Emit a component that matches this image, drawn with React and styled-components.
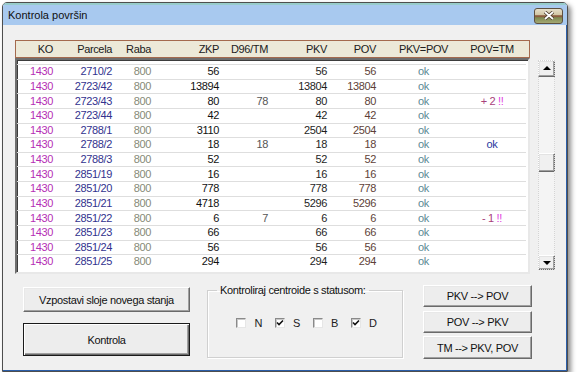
import React from "react"
import styled, { createGlobalStyle } from "styled-components"

const GlobalStyle = createGlobalStyle`
  body {
    margin: 0;
    background: #ffffff;
    font-family: "Liberation Sans", Arial, sans-serif;
  }
`

const columns = [
  { key: "ko", label: "KO", width: 39, align: "right", color: "#b52fb5" },
  { key: "parcela", label: "Parcela", width: 59, align: "right", color: "#32328e" },
  { key: "raba", label: "Raba", width: 39, align: "right", color: "#868a78" },
  { key: "zkp", label: "ZKP", width: 68, align: "right", color: "#111111" },
  { key: "d96", label: "D96/TM", width: 49, align: "right", color: "#555555" },
  { key: "pkv", label: "PKV", width: 59, align: "right", color: "#1e1e1e" },
  { key: "pov", label: "POV", width: 49, align: "right", color: "#5e3f38" },
  { key: "eq", label: "PKV=POV", width: 89, align: "center", color: "#5a8a94" },
  { key: "tm", label: "POV=TM", width: 48, align: "center", color: "#2838a0" }
]

const gridCols = columns.map(c => `${c.width}px`).join(" ")

const rows = [
  ["2710/2", "56", "", "56", "56", "ok", ""],
  ["2723/42", "13894", "", "13804", "13804", "ok", ""],
  ["2723/43", "80", "78", "80", "80", "ok", "+2"],
  ["2723/44", "42", "", "42", "42", "ok", ""],
  ["2788/1", "3110", "", "2504", "2504", "ok", ""],
  ["2788/2", "18", "18", "18", "18", "ok", "ok"],
  ["2788/3", "52", "", "52", "52", "ok", ""],
  ["2851/19", "16", "", "16", "16", "ok", ""],
  ["2851/20", "778", "", "778", "778", "ok", ""],
  ["2851/21", "4718", "", "5296", "5296", "ok", ""],
  ["2851/22", "6", "7", "6", "6", "ok", "-1"],
  ["2851/23", "66", "", "66", "66", "ok", ""],
  ["2851/24", "56", "", "56", "56", "ok", ""],
  ["2851/25", "294", "", "294", "294", "ok", ""]
]

const statuses = [
  { label: "N", checked: false },
  { label: "S", checked: true },
  { label: "B", checked: false },
  { label: "D", checked: true }
]

const Window = styled.div`
  margin: 2px 0 0 2px;
  width: 566px;
  height: 370px;
  box-sizing: border-box;
  border: 1px solid #4e4e4e;
  border-radius: 5px 5px 0 0;
  box-shadow: 3px 3px 5px rgba(0, 0, 0, 0.45);
  display: flex;
  flex-direction: column;
  overflow: hidden;
`

const TitleBar = styled.div`
  height: 22px;
  box-sizing: border-box;
  border-top: 2px solid #97cccb;
  background: #a8c9ef;
  display: flex;
  align-items: center;
  justify-content: space-between;
  padding: 0 4px 0 5px;
  font-size: 11px;
  color: #101010;
`

const CloseButton = styled.div`
  width: 29px;
  height: 16px;
  margin-top: 1px;
  box-sizing: border-box;
  border: 1px solid #5e5040;
  border-radius: 3px;
  background: linear-gradient(
    #e6dfca 0%,
    #d2c7a6 40%,
    #8c5e40 48%,
    #8c5e40 56%,
    #7e8a50 62%,
    #a4a874 100%
  );
  display: flex;
  align-items: center;
  justify-content: center;
`

const Client = styled.div`
  flex: 1;
  background: #f0f0f0;
  border-right: 1px solid #2b5ea8;
  border-bottom: 1px solid #2b5ea8;
  padding: 15px 0 0 12px;
  display: flex;
  flex-direction: column;
  font-size: 11px;
  letter-spacing: -0.35px;
`

const TopArea = styled.div`
  display: flex;
  gap: 8px;
`

const Table = styled.div`
  width: 515px;
  display: flex;
  flex-direction: column;
`

const Header = styled.div`
  height: 18px;
  box-sizing: border-box;
  border: 1px solid #a46a4e;
  padding-left: 1px;
  background: #ece9d8;
  display: grid;
  grid-template-columns: ${gridCols};
  align-items: center;
  color: #202020;
`

const Cell = styled.div`
  text-align: ${p => p.$align};
  padding-right: ${p => (p.$align === "right" ? "3px" : "0")};
  color: ${p => p.$color || "inherit"};
  white-space: nowrap;
  overflow: hidden;
`

const List = styled.div`
  height: 216px;
  box-sizing: border-box;
  border: 2px solid;
  border-color: #6e6e6e #e8e8e8 #e8e8e8 #6e6e6e;
  box-shadow: inset 1px 1px #3c3c3c;
  background: #ffffff;
  padding: 4px 2px 0 0;
  overflow: hidden;
`

const Row = styled.div`
  height: 14.64px;
  box-sizing: border-box;
  border-top: 1px solid #dedede;
  display: grid;
  grid-template-columns: ${gridCols};
  align-items: center;
  line-height: 13px;
`

const Warn = styled.span`
  color: #a8407a;
  b {
    font-weight: normal;
    color: #e040e0;
  }
`

const ScrollBar = styled.div`
  margin-top: 20px;
  width: 17px;
  height: 210px;
  display: flex;
  flex-direction: column;
  justify-content: space-between;
  background: #f4f4f4;
  outline: 1px dotted #d4d4d4;
  outline-offset: -1px;
`

const Bevel = styled.div`
  width: 17px;
  height: ${p => p.$h || 17}px;
  box-sizing: border-box;
  border: 1px solid;
  border-color: #ffffff #6a6a6a #6a6a6a #ffffff;
  box-shadow: inset -1px -1px #a0a0a0, inset 1px 1px #e3e3e3;
  background: #f0f0f0;
  display: flex;
  align-items: center;
  justify-content: center;
`

const Track = styled.div`
  flex: 1;
  display: flex;
  flex-direction: column;
  padding-top: 76px;
`

const Arrow = styled.div`
  width: 0;
  height: 0;
  border-left: 4px solid transparent;
  border-right: 4px solid transparent;
  ${p =>
    p.$down
      ? "border-top: 4px solid #000; margin-top: 1px;"
      : "border-bottom: 4px solid #000; margin-bottom: 1px;"}
`

const BottomArea = styled.div`
  margin-top: 11px;
  display: flex;
  align-items: flex-start;
`

const LeftColumn = styled.div`
  margin-left: 8px;
  padding-top: 2px;
  width: 167px;
  display: flex;
  flex-direction: column;
  gap: 11px;
`

const Button = styled.button`
  height: ${p => p.$h}px;
  width: 100%;
  box-sizing: border-box;
  border: 1px solid;
  border-color: ${p => (p.$default ? "#1a1a1a" : "#ffffff #6a6a6a #6a6a6a #ffffff")};
  box-shadow: ${p =>
    p.$default
      ? "inset 1px 1px #ffffff, inset -1px -1px #6a6a6a, inset -2px -2px #a0a0a0"
      : "inset -1px -1px #a0a0a0, inset 1px 1px #e8e8e8"};
  background: #ededed;
  font-family: inherit;
  font-size: 11px;
  letter-spacing: -0.35px;
  color: #111111;
  padding: 0;
`

const GroupBox = styled.fieldset`
  margin: -1px 0 0 17px;
  width: 196px;
  height: 74px;
  box-sizing: border-box;
  padding: 0;
  border: 1px solid #d0d0d0;
  box-shadow: inset 1px 1px #ffffff, 1px 1px #ffffff;
  display: flex;
  justify-content: center;
  align-items: center;
`

const Legend = styled.legend`
  margin-left: 9px;
  padding: 0 3px;
  line-height: 12px;
  color: #111111;
`

const Checks = styled.div`
  display: flex;
  gap: 13px;
  margin-top: -8px;
  margin-left: 3px;
`

const CheckItem = styled.label`
  display: flex;
  align-items: center;
  gap: 8px;
  color: #202020;
`

const Box = styled.span`
  width: 10px;
  height: 10px;
  box-sizing: border-box;
  border: 1px solid;
  border-color: #8a8a8a #e6e6e6 #e6e6e6 #8a8a8a;
  box-shadow: inset 1px 1px #c8c8c8;
  background: #ffffff;
  display: flex;
  align-items: center;
  justify-content: center;
`

const RightColumn = styled.div`
  margin-left: 20px;
  width: 109px;
  display: flex;
  flex-direction: column;
  gap: 3.5px;
`

function renderValue(key, value) {
  if (key === "tm" && value === "+2")
    return (
      <Warn>
        + 2 <b>!!</b>
      </Warn>
    )
  if (key === "tm" && value === "-1")
    return (
      <Warn>
        - 1 <b>!!</b>
      </Warn>
    )
  return value
}

export default function App() {
  return (
    <>
      <GlobalStyle />
      <Window>
        <TitleBar>
          <span>Kontrola površin</span>
          <CloseButton>
            <svg width="12" height="9" viewBox="0 0 12 9">
              <path d="M2 1 L10 8 M10 1 L2 8" stroke="#4a3a2a" strokeWidth="3.4" />
              <path d="M2 1 L10 8 M10 1 L2 8" stroke="#ffffff" strokeWidth="1.8" />
            </svg>
          </CloseButton>
        </TitleBar>
        <Client>
          <TopArea>
            <Table>
              <Header>
                {columns.map(c => (
                  <Cell key={c.key} $align={c.align}>
                    {c.label}
                  </Cell>
                ))}
              </Header>
              <List>
                {rows.map((r, i) => {
                  const values = ["1430", r[0], "800", ...r.slice(1)]
                  return (
                    <Row key={i}>
                      {columns.map((c, j) => (
                        <Cell key={c.key} $align={c.align} $color={c.color}>
                          {renderValue(c.key, values[j])}
                        </Cell>
                      ))}
                    </Row>
                  )
                })}
              </List>
            </Table>
            <ScrollBar>
              <Bevel>
                <Arrow />
              </Bevel>
              <Track>
                <Bevel $h={19} />
              </Track>
              <Bevel $h={15}>
                <Arrow $down />
              </Bevel>
            </ScrollBar>
          </TopArea>
          <BottomArea>
            <LeftColumn>
              <Button $h={25}>Vzpostavi sloje novega stanja</Button>
              <Button $h={33} $default>
                Kontrola
              </Button>
            </LeftColumn>
            <GroupBox>
              <Legend>Kontroliraj centroide s statusom:</Legend>
              <Checks>
                {statuses.map(s => (
                  <CheckItem key={s.label}>
                    <Box>
                      {s.checked && (
                        <svg width="8" height="8" viewBox="0 0 8 8">
                          <path d="M1 3.5 L3 5.5 L7 1.5" fill="none" stroke="#111" strokeWidth="1.6" />
                        </svg>
                      )}
                    </Box>
                    {s.label}
                  </CheckItem>
                ))}
              </Checks>
            </GroupBox>
            <RightColumn>
              <Button $h={22}>PKV --&gt; POV</Button>
              <Button $h={22}>POV --&gt; PKV</Button>
              <Button $h={23}>TM --&gt; PKV, POV</Button>
            </RightColumn>
          </BottomArea>
        </Client>
      </Window>
    </>
  )
}
